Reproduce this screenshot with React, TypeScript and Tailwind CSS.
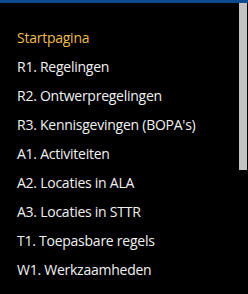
export default function App() {
  const items = [
    "R1. Regelingen",
    "R2. Ontwerpregelingen",
    "R3. Kennisgevingen (BOPA's)",
    "A1. Activiteiten",
    "A2. Locaties in ALA",
    "A3. Locaties in STTR",
    "T1. Toepasbare regels",
    "W1. Werkzaamheden",
  ];
  return (
    <div className="w-[248px] h-[294px] bg-black flex flex-col overflow-hidden" style={{ fontFamily: '"Open Sans", "Noto Sans", sans-serif' }}>
      <div className="h-[3px] bg-[#0b4a8e] shrink-0" />
      <div className="flex flex-1 min-h-0">
        <ul className="flex-1 pl-[17px] pt-[20px] text-[14px] tracking-[-0.25px] text-[#f2f2f2]">
          <li className="h-[29px] flex items-center text-[#eebd52]">Startpagina</li>
          {items.map((t) => (
            <li key={t} className="h-[29px] flex items-center">{t}</li>
          ))}
        </ul>
        <div className="w-[9px] flex flex-col">
          <div className="h-[167px] w-[8px] bg-[#c3c3c3]" />
        </div>
      </div>
    </div>
  );
}
